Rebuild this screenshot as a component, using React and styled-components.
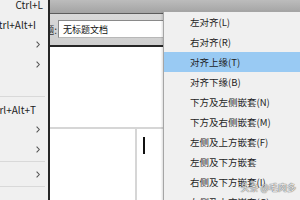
import React from 'react'
import styled, { createGlobalStyle } from 'styled-components'

const GlobalStyle = createGlobalStyle`
  html, body {
    margin: 0;
    padding: 0;
    overflow: hidden;
    background: #fff;
  }
  #root {
    width: 300px;
    height: 200px;
  }
`

const sideItems = [
  { key: 'Ctrl+L', pad: 5 },
  { key: 'Ctrl+Alt+I' },
  { arrow: true },
  { arrow: true },
  { key: '' },
  { sep: true },
  { key: 'Ctrl+Alt+T' },
  { arrow: true },
  { arrow: true },
  { sep: true },
  { arrow: true },
  { sep: true },
  { key: '' },
]

const menuItems = [
  '左对齐(L)',
  '右对齐(R)',
  '对齐上缘(T)',
  '对齐下缘(B)',
  '下方及左侧嵌套(N)',
  '下方及右侧嵌套(M)',
  '左侧及上方嵌套(F)',
  '左侧及下方嵌套',
  '右侧及下方嵌套(I)',
  '左侧及上方嵌套(G)',
]

const Chevron = () => (
  <svg width="4" height="7" viewBox="0 0 4 7">
    <path d="M0.6 0.6 L3.3 3.5 L0.6 6.4" fill="none" stroke="#555" strokeWidth="1.1" />
  </svg>
)

const App = () => {
  return (
    <Screen>
      <GlobalStyle />
      <SideMenu>
        <SideList>
          {sideItems.map((item, i) =>
            item.sep ? (
              <SideSep key={i} />
            ) : (
              <SideRow key={i} $arrow={item.arrow} $pad={item.pad}>
                {item.arrow ? <Chevron /> : item.key}
              </SideRow>
            )
          )}
        </SideList>
      </SideMenu>

      <Workspace>
        <TitleStrip />
        <Toolbar>
          <LabelTail>
            <span>标题:</span>
          </LabelTail>
          <Field>无标题文档</Field>
        </Toolbar>
        <Canvas>
          <TableArea>
            <LeftCell />
            <RightCell>
              <Caret />
            </RightCell>
          </TableArea>
        </Canvas>
      </Workspace>

      <Dropdown>
        {menuItems.map((label, i) => (
          <MenuItem key={label} $active={i === 2}>
            {label}
          </MenuItem>
        ))}
      </Dropdown>

      <Watermark>头条 @毛肉多</Watermark>
    </Screen>
  )
}

const Screen = styled.div`
  position: relative;
  display: flex;
  width: 300px;
  height: 200px;
  overflow: hidden;
  font-family: "Noto Sans CJK SC", "Noto Sans", sans-serif;
  color: #1e1e1e;
`

const SideMenu = styled.div`
  width: 48px;
  flex-shrink: 0;
  background: #f0f0f0;
  border-right: 2px solid #262626;
  overflow: hidden;
`

const SideList = styled.div`
  margin-top: -6px;
  display: flex;
  flex-direction: column;
`

const SideRow = styled.div`
  height: 20px;
  display: flex;
  align-items: center;
  justify-content: flex-end;
  padding-right: ${p => (p.$pad != null ? p.$pad : p.$arrow ? 8 : 12)}px;
  font-size: 10px;
  white-space: nowrap;
  color: #222;
`

const SideSep = styled.div`
  height: 1px;
  margin: 2px 3px 2px 0;
  background: #d9d9d9;
`

const Workspace = styled.div`
  flex: 1;
  display: flex;
  flex-direction: column;
  min-width: 0;
`

const TitleStrip = styled.div`
  height: 13px;
  background: linear-gradient(#bcbcbc, #a3a3a3);
  border-bottom: 1px solid #5c5c5c;
`

const Toolbar = styled.div`
  height: 33px;
  box-sizing: border-box;
  padding-top: 6px;
  display: flex;
  align-items: flex-start;
  background: linear-gradient(#d8d8d8, #cfcfcf);
  border-bottom: 2px solid #262626;
`

const LabelTail = styled.div`
  width: 7px;
  height: 18px;
  display: flex;
  justify-content: flex-end;
  align-items: center;
  overflow: hidden;
  font-size: 10px;
  white-space: nowrap;
  color: #333;
`

const Field = styled.div`
  flex: 1;
  height: 18px;
  margin-left: 1px;
  box-sizing: border-box;
  padding-left: 4px;
  display: flex;
  align-items: center;
  background: #fff;
  border-top: 1px solid #8a8a8a;
  border-left: 1px solid #8a8a8a;
  border-bottom: 1px solid #b8b8b8;
  font-size: 9px;
  white-space: nowrap;
  color: #111;
`

const Canvas = styled.div`
  flex: 1;
  display: flex;
  flex-direction: column;
  padding-top: 80px;
  background: #fff;
`

const TableArea = styled.div`
  flex: 1;
  display: flex;
  border-top: 2px solid #d6d6d6;
`

const LeftCell = styled.div`
  width: 85px;
  border-right: 2px solid #d6d6d6;
`

const RightCell = styled.div`
  flex: 1;
  padding: 8px 0 0 6px;
`

const Caret = styled.div`
  width: 2px;
  height: 17px;
  background: #111;
`

const Dropdown = styled.div`
  position: absolute;
  left: 163px;
  top: 11px;
  right: 0;
  bottom: 0;
  background: #f0f0f0;
  border-left: 1px solid #a5a5a5;
  border-top: 1px solid #a5a5a5;
  box-shadow: -1px 1px 2px rgba(0, 0, 0, 0.15);
`

const MenuItem = styled.div`
  height: 20px;
  display: flex;
  align-items: center;
  padding-left: 26px;
  font-size: 9.5px;
  white-space: nowrap;
  color: #1e1e1e;
  background: ${p => (p.$active ? '#99caf3' : 'transparent')};
`

const Watermark = styled.div`
  position: absolute;
  right: 4px;
  bottom: 6px;
  font-size: 9px;
  color: rgba(255, 255, 255, 0.9);
  text-shadow: 0 0 1px #555, 0 0 1px #555;
  white-space: nowrap;
`

export default App
